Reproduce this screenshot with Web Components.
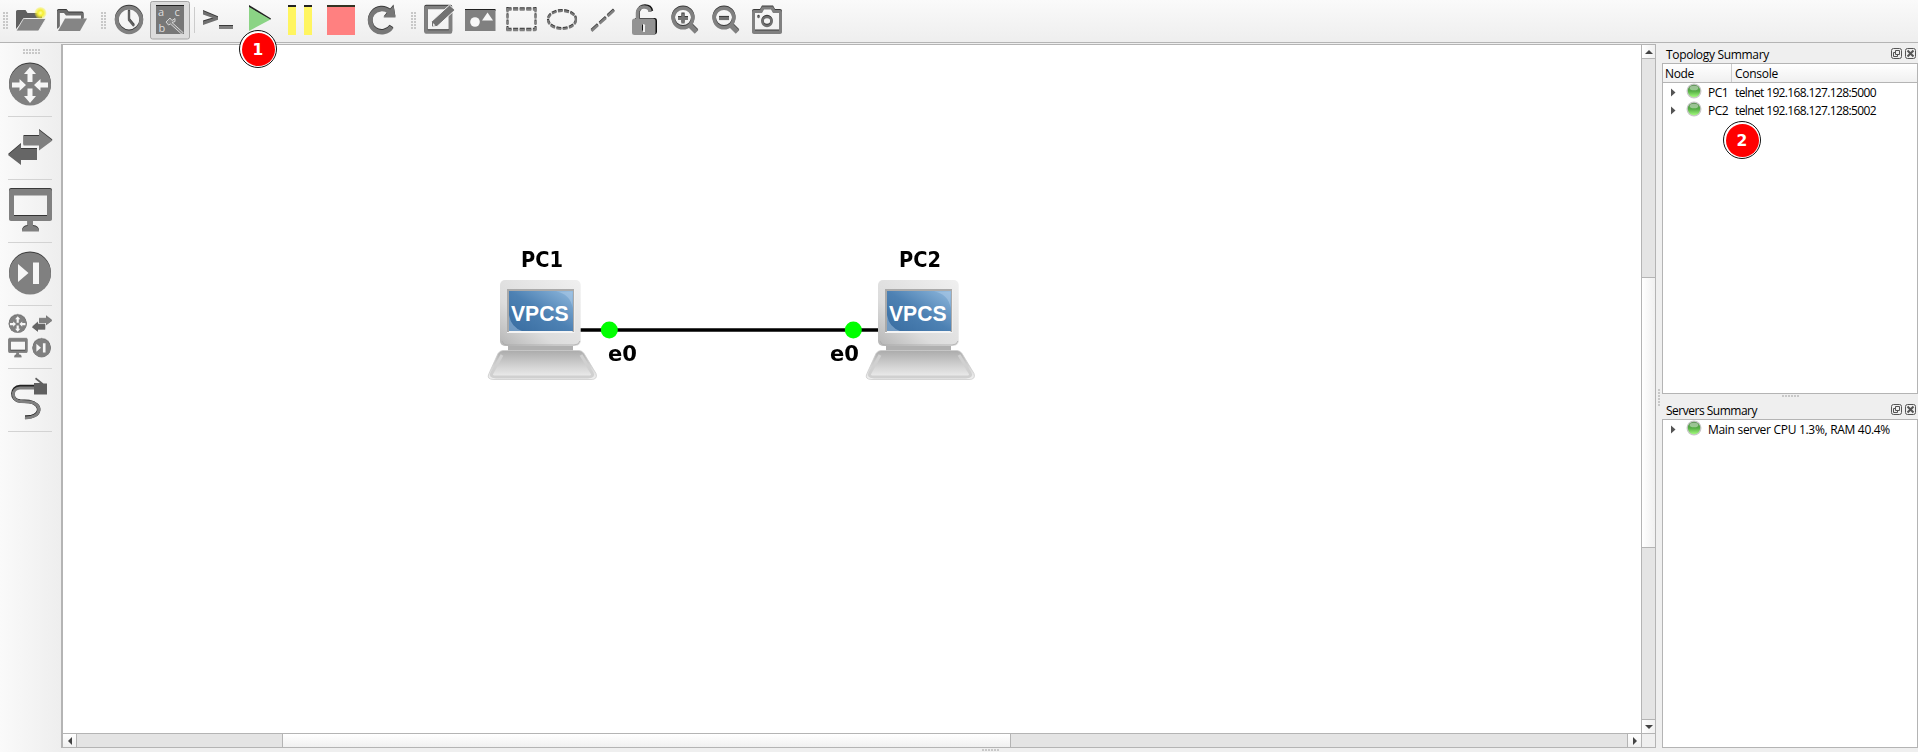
<!DOCTYPE html>
<html lang="en"><head><meta charset="utf-8"><title>Topology</title>
<style>html,body{margin:0;height:100%;overflow:hidden;background:#efefef}body{font:12px/18px "Open Sans","Noto Sans",sans-serif;color:#000}</style>
</head><body><topology-app></topology-app>
<script>
const def=(name,html,init)=>customElements.define(name,class extends HTMLElement{
  connectedCallback(){ if(this.shadowRoot)return; const r=this.attachShadow({mode:'open'});
    r.innerHTML=typeof html==='function'?html(this):html; if(init)init(this,r);}
});

/* Text fitted to a given advance width: by letter spacing, or by scaling with the stretch attribute */
def('fit-text','<style>:host{display:inline-block;white-space:nowrap;flex:none}span{display:inline-block;transform-origin:0 0}</style><span><slot></slot></span>',(el,r)=>{
  const w=+el.getAttribute('w'),s=r.querySelector('span'),n=el.textContent.length,m=s.getBoundingClientRect().width;
  el.style.width=w+'px';
  if(el.hasAttribute('stretch'))s.style.transform=`scaleX(${w/m})`; else s.style.letterSpacing=((w-m)/n)+'px';
});

const G='#808080';
const ROUTER=`<circle cx="30" cy="84.500" r="21" fill="${G}"/>`;
const routerArrows='<path fill="#f6f6f6" d="M30 67l6 7h-3.500v8h-5v-8h-3.500zM30 103l6-7h-3.500v-7.500h-5V96h-3.500zM26 85l-6.500-6v3.500H12v5h7.500V91zM34 85l6.500-6v3.500H48v5h-7.500V91z"/>';
const shapes={
 open1:`<path fill="#606060" d="M16 29V11.500q0-1.500 1.500-1.500h8l2 3H41q1 0 1 1v4H26z"/><path fill="#858585" stroke="#f6f6f6" stroke-width=".8" d="M23.500 18.500H46L38.500 31H16z"/><circle cx="40.500" cy="13" r="6" fill="url(#glow)"/><defs><radialGradient id="glow"><stop offset="0" stop-color="#ffffa0"/><stop offset=".45" stop-color="#f5ee30"/><stop offset="1" stop-color="#f5ee30" stop-opacity=".25"/></radialGradient></defs>`,
 open2:`<g class="s"><path fill="#6d6d6d" d="M57 29V11.500q0-1.500 1.500-1.500h8l2 2.500H82q1.500 0 1.500 1.500v5H81v-3.500H66l-2-2.500h-4.500V27z"/></g><path fill="#858585" d="M65 18.500h22L80 31H58z"/>`,
 clock:`<g class="s"><circle cx="129" cy="20" r="12.300" fill="none" stroke="${G}" stroke-width="3.800"/><path d="M129 10.500v9.500l5 6" fill="none" stroke="#5f5f5f" stroke-width="2.200"/></g>`,
 label:`<rect x="150.500" y="1.500" width="39" height="37.500" rx="2" fill="#dcdcdc" stroke="#a6a6a6"/><path fill="#222" d="M156 5h28v2h-28z"/><path fill="#777" d="M156 6h28v28h-28z"/><g fill="#dedede" font-family="Open Sans,sans-serif" font-size="11"><text x="158" y="16">a</text><text x="174.500" y="16">c</text><text x="158.500" y="31.500">b</text></g><path d="M166 22l4-4 2 2.500 3-2v3l-3 1 11 10-1.500 1.500-11-10-2 1z" fill="#888" stroke="#ddd" stroke-width=".9"/>`,
 console:`<g class="s"><path fill="#707070" d="M203 11l15 6.200v2.600L203 25v-3.500l10.500-3.300L203 14.500z"/><path fill="${G}" d="M219 26h14v3h-14z"/></g>`,
 play:'<path fill="#222" d="M249 5l22 13.500-1 1.500L249 7.500z"/><path fill="#8bd485" d="M249 7l21.500 12.500L249 31z"/>',
 pause:'<path fill="#222" d="M288 5h8v3h-8zM304 5h8v3h-8z"/><path fill="#fff560" d="M288 7h8v28h-8zM304 7h8v28h-8z"/>',
 stop:'<path fill="#332" d="M327 5h28v3h-28z"/><path fill="#ff8080" d="M327 7h28v28h-28z"/>',
 reload:`<g class="s"><path fill="none" stroke="#777" stroke-width="4.600" d="M389.500 12A11.600 11.600 0 1 0 391.500 27"/><path fill="#777" d="M393.500 5.500l2 12h-12z"/></g>`,
 edit:`<g class="s"><path fill="none" stroke="${G}" stroke-width="3.400" stroke-linejoin="round" d="M426 7.500h24.500v24.500H426z"/></g><path fill="#727272" stroke="#f5f5f5" stroke-width="1" d="M431.500 27v-5.500L449.500 5l5.500 5-18 16.500z"/><path fill="#eee" d="M433 23l2.500 2.500-2.500.5z"/>`,
 image:`<path fill="#222" d="M465 9h30.500v2H465z"/><path fill="${G}" d="M465 10h30.500v21H465z"/><circle cx="475" cy="22" r="4.800" fill="#f8f8f8"/><path fill="#f8f8f8" d="M482 20.500l5.500-8 5.500 8z"/>`,
 rect:`<g class="s"><path fill="none" stroke="${G}" stroke-width="2" d="M507.500 8v23m28-23v23" stroke-dasharray="4.500 1.800"/><path fill="none" stroke="${G}" stroke-width="2.400" d="M506.500 9.500h29m-29 20.500h29" stroke-dasharray="5 1.600"/></g>`,
 ellipse:`<g class="s"><ellipse cx="562" cy="20" rx="14" ry="9" fill="none" stroke="#777" stroke-width="2.200" stroke-dasharray="4.800 1.500"/></g>`,
 line:`<g class="s"><path fill="none" stroke="${G}" stroke-width="2.600" stroke-dasharray="8.500 2.400" d="M591.500 31L614.500 10"/></g>`,
 lock:`<path fill="#111" d="M635 18h20q2 0 2 2.500v11q0 3-3 3h-18z"/><path fill="none" stroke="#111" stroke-width="3.500" d="M638 19v-7q1.500-6 7-6t6.500 5"/><path fill="none" stroke="#888" stroke-width="3.500" d="M637.500 19v-6q.5-6 6.500-6t6 5"/><rect x="632" y="18.500" width="23.500" height="16.500" rx="2.500" fill="#939393"/><circle cx="643.500" cy="25.500" r="1.600" fill="#eee"/><path fill="#eee" d="M643 25h2v7h-2z"/><path stroke="#111" d="M642.500 24.500v6"/>`,
 zin:`<g class="s"><circle cx="683" cy="18" r="9.800" fill="none" stroke="${G}" stroke-width="3.500"/><path fill="none" stroke="${G}" stroke-width="5" d="M689.500 25l7 7"/><path stroke="#737373" stroke-width="3.200" d="M678 18.500h10m-5-5v10"/></g>`,
 zout:`<g class="s"><circle cx="724" cy="18" r="9.800" fill="none" stroke="${G}" stroke-width="3.500"/><path fill="none" stroke="${G}" stroke-width="5" d="M730.500 25l7 7"/><path stroke="#737373" stroke-width="3.200" d="M719 18.500h10"/></g>`,
 camera:`<g class="s"><path fill="${G}" fill-rule="evenodd" d="M754 10h6l2-3.500h11l2 3.500h5q2 0 2 2v20q0 2-2 2h-26q-2 0-2-2V12q0-2 2-2zm1 3v17.500h24V13h-6l-2-3.500h-7L762 13z"/><circle cx="767" cy="21.500" r="4.500" fill="none" stroke="#707070" stroke-width="2.500"/><circle cx="758.500" cy="17" r="1.200" fill="#666"/></g>`,
 router:`<g class="s">${ROUTER}</g>${routerArrows}`,
 sw:`<g class="s"><path fill="${G}" d="M23.500 136H39v-6l13.500 10.500L39 150.500v-5H23.500z"/><path fill="#666" d="M37 149H21v-5L8 155l13 10v-5h16z"/></g>`,
 pc:`<g class="s"><path fill="${G}" fill-rule="evenodd" d="M11 189h39q2 0 2 2v28q0 2-2 2H33v5q6 .5 6 5.500H22q0-5 5.500-5.500v-5H11q-2 0-2-2v-28q0-2 2-2zm3 6.500V216h33v-20.500z"/></g><path stroke="#333" d="M14 215.500h33"/>`,
 fw:`<g class="s"><circle cx="30" cy="273.500" r="21" fill="${G}"/></g><path fill="#f6f6f6" d="M18 264v18l10.500-9zM33 262.500h6V284h-6z"/>`,
 cable:`<g fill="none"><path stroke="#222" stroke-width="3.500" d="M34.500 386.500H20c-9 0-10 13.500 0 14.500l9 .5c14 2 13 16.500-4 15.500"/><path stroke="${G}" stroke-width="3" d="M35 388H20c-9 0-9 13 1 13.500l9 .5c13 2 12 16-5 16"/></g><path fill="#606060" d="M34 383h6l-5-4 1-1.500 7.500 6H47v11H34z"/>`
};
shapes.all=`<g transform="translate(4.800,287.500) scale(.43)">${shapes.router}</g><g transform="translate(28.500,257.500) scale(.45)">${shapes.sw}</g><g transform="translate(4.500,255.500) scale(.44)">${shapes.pc}</g><g transform="translate(28.500,228.500) scale(.437)">${shapes.fw}</g>`;

def('tool-icon',el=>{const v=el.getAttribute('view');const [,,w,h]=v.split(' ');return `<style>:host{display:block;flex:none;width:${w}px;height:${h}px}svg{display:block}.s{filter:drop-shadow(0 -1px 0 #3a3a3a)}</style><svg width="${w}" height="${h}" viewBox="${v}">${shapes[el.getAttribute('name')]}</svg>`;});

def('grip-dots',`<style>:host{display:block;flex:none;background:radial-gradient(circle at 1px 1px,#c8c8c8 .9px,transparent 1px) 0 0/3px 3px}</style>`);

def('tool-bar',()=>{
  const b=(n,i)=>n.split(' ').map((k,j)=>`<tool-icon name="${k}" view="${i+41*j} 0 41 42"></tool-icon>`).join('');
  return `<style>:host{display:flex;height:42px;background:linear-gradient(#fafafa,#eee);border-bottom:1px solid #b4b4b4}
  grip-dots{width:5px;height:17px;margin-top:12px}i{width:1px;height:26px;margin:7px 3px 0;background:#ccc}</style>
  <grip-dots style="margin-left:3px;margin-right:3px"></grip-dots>${b('open1 open2',11)}
  <grip-dots style="margin-left:8px;margin-right:3px"></grip-dots>${b('clock label',109)}<i></i>
  ${b('console play pause stop reload',198)}<grip-dots style="margin-left:8px;margin-right:2px"></grip-dots>${b('edit image rect ellipse line lock zin zout camera',418)}`;
});

def('side-bar',()=>`<style>:host{display:block;width:61px;flex:none;background:linear-gradient(90deg,#fafafa,#eee);box-sizing:border-box}
  grip-dots{width:17px;height:5px;margin:6px 0 0 23px}
  div{width:44px;height:62px;margin-left:8px;border-bottom:1px solid #d3d3d3}</style><grip-dots></grip-dots>`+
  'router sw pc fw all cable'.split(' ').map((k,j)=>`<div><tool-icon name="${k}" view="8 ${54+63*j} 45 62"></tool-icon></div>`).join(''));

def('scroll-bar',el=>{
  const v=el.hasAttribute('vertical'),[a,t]=el.getAttribute('thumb').split(' ');
  return `<style>:host{display:flex;flex-direction:${v?'column':'row'};box-sizing:border-box;background:#e4e4e4;border-${v?'left':'top'}:1px solid #b4b4b4}
  div{box-sizing:border-box;flex:none;background:linear-gradient(${v?'90deg':'180deg'},#fff,#f0f0f0);display:flex;align-items:center;justify-content:center}
  .b{${v?'height:14px':'width:14px'}}.b:first-of-type{border-${v?'bottom':'right'}:1px solid #b4b4b4}.b:last-of-type{border-${v?'top':'left'}:1px solid #b4b4b4}
  .t{${v?'height':'width'}:${t}px;border:0 solid #b4b4b4;border-${v?'width:1px 0':'width:0 1px'}}
  .g{flex:none;${v?'height':'width'}:${a-14}px}.f{flex:1}</style>
  <div class="b"><svg width="8" height="8"><path fill="#444" d="${v?'M0 6L4 2l4 4z':'M6 0L2 4l4 4z'}"/></svg></div><span class="g"></span><div class="t"></div><span class="f"></span>
  <div class="b"><svg width="8" height="8"><path fill="#444" d="${v?'M0 2L4 6l4-4z':'M2 0l4 4-4 4z'}"/></svg></div>`;
});

/* A VPCS host: name above, drawn computer below */
def('vpcs-node',`<style>:host{position:absolute;display:block;width:110px}.n{box-sizing:border-box;padding-top:2px;font:bold 20.500px/24px "DejaVu Sans",sans-serif;margin-left:34px;height:33px}svg{display:block}</style>
 <div class="n"><fit-text stretch w="42"><slot></slot></fit-text></div>
 <svg width="110" height="102" viewBox="487 279 110 102"><defs>
 <linearGradient id="c" x1="1" y1="0" x2="0" y2="1"><stop offset="0" stop-color="#f0f0f0"/><stop offset=".65" stop-color="#dcdcdc"/><stop offset="1" stop-color="#b5b5b5"/></linearGradient>
 <linearGradient id="s" x1="1" y1="0" x2="0" y2="1"><stop offset="0" stop-color="#8fb8dd"/><stop offset=".5" stop-color="#4d81b3"/><stop offset="1" stop-color="#386ca0"/></linearGradient>
 <linearGradient id="k" x1="0" y1="0" x2="0" y2="1"><stop offset="0" stop-color="#ababab"/><stop offset=".5" stop-color="#d0d0d0"/><stop offset="1" stop-color="#f2f2f2"/></linearGradient></defs>
 <path fill="#b0b0b0" d="M508 345h65v6h-65z"/><rect x="500" y="280" width="80.700" height="66" rx="5" fill="url(#c)"/><path d="M502 341q1 4 5 4h67q5 0 6-4" fill="none" stroke="#aaa" stroke-width=".8"/>
 <path fill="#f4f4f4" d="M507 289.500h67.500V333H507z"/><path fill="#aaa" d="M507 289h67v2.500h-65V332h-2zM572.500 291h1.500v41h-1.500z"/><path fill="url(#s)" d="M509 291h64v40h-64z"/>
 <path fill="#b5d0ea" opacity=".45" d="M556 291.500h16.500V308q-2-14-16.500-16.500zM509 315q2 12 13 16h-13z"/>
 <path fill="url(#k)" stroke="#ccc" stroke-width=".8" d="M503 350.500h76q3 0 5 3l12 20q2 6-5 6h-97q-8 0-5-6l9-20q2-3 5-3z"/><path fill="none" stroke="#d0d0d0" stroke-width="3" d="M502 355l-10 18q-2 4 4 4h92q6 0 4-4l-11-18"/>
 <text x="511" y="321" textLength="57.500" lengthAdjust="spacingAndGlyphs" font-family="Liberation Sans,sans-serif" font-weight="bold" font-size="22" fill="#fff">VPCS</text></svg>`);

def('number-badge',`<style>:host{position:absolute;display:block;box-sizing:border-box;width:38px;height:38px;border-radius:50%;border:1px solid #111;background:#fff;padding:1.500px}div{height:33px;border-radius:50%;background:#f00;color:#fff;font:bold 15.500px/34px "DejaVu Sans",sans-serif;text-align:center}</style><div><slot></slot></div>`);

def('topology-canvas',`<style>:host{position:relative;display:grid;box-sizing:border-box;width:1595px;height:704px;margin-top:1px;flex:none;grid-template:1fr 14px/1fr 14px;border:1px solid #b4b4b4;border-left-width:2px;background:#fff}
 .c{position:relative}.k{border:solid #b4b4b4;border-width:1px 0 0 1px;background:#efefef}
 .l,.w{position:absolute}.w{font:bold 20.500px/24px "DejaVu Sans",sans-serif}</style>
 <div class="c"><svg class="l" style="left:517px;top:275px" width="300" height="20"><path stroke="#000" stroke-width="3.500" d="M0 10h300"/><circle cx="29.300" cy="10" r="8.500" fill="#0f0"/><circle cx="273.300" cy="10" r="8.500" fill="#0f0"/></svg>
 <vpcs-node style="left:424px;top:201px">PC1</vpcs-node><vpcs-node style="left:802px;top:201px">PC2</vpcs-node>
 <fit-text class="w" stretch w="29" style="left:544.500px;top:297px">e0</fit-text><fit-text class="w" stretch w="29" style="left:766.500px;top:297px">e0</fit-text></div>
 <scroll-bar vertical thumb="232 271"></scroll-bar><scroll-bar thumb="219 729"></scroll-bar><div class="k"></div>`);

def('status-led','<style>:host{display:block;flex:none;width:16px;height:16px}svg{display:block}</style><svg width="16" height="16"><defs><linearGradient id="g" x1="0" y1="0" x2="0" y2="1"><stop offset="0" stop-color="#5c8f55"/><stop offset=".5" stop-color="#55ad45"/><stop offset="1" stop-color="#a2fb7c"/></linearGradient></defs><circle cx="8" cy="8" r="7.500" fill="#c8c8c8"/><circle cx="8" cy="8" r="6.200" fill="url(#g)"/><ellipse cx="8" cy="5" rx="4.300" ry="2.300" fill="#fff" opacity=".4"/></svg>');

def('tree-row',`<style>:host{display:flex;height:18px;line-height:20px}svg{width:6px;height:9px;margin:5px 14px 0 8px;flex:none}status-led{margin:0 6px 0 -5px}</style>
 <svg viewBox="0 0 6 9"><path fill="#555" d="M0 .5L4.500 4.500 0 8.500z"/></svg><status-led></status-led><slot></slot>`);

def('dock-panel',el=>`<style>:host{display:flex;flex-direction:column;box-sizing:border-box}header{display:flex;height:19px;line-height:21px;padding-left:4px;flex:none}
 header svg{margin-top:4px}header svg:first-of-type{margin-left:auto}header svg:last-of-type{margin:4px 2px 0 3px}
 main{flex:1;border:1px solid #b4b4b4;background:#fff}</style>
 <header><fit-text w="${el.getAttribute('w')}">${el.getAttribute('label')}</fit-text>
 <svg width="11" height="11" fill="none" stroke="#555"><rect x=".5" y=".5" width="10" height="10" rx="2"/><path d="M4.500 2.500h4v4h-4zM4 4.500H2.500v4h4V7"/></svg>
 <svg width="11" height="11" fill="none" stroke="#555"><rect x=".5" y=".5" width="10" height="10" rx="2"/><path stroke-width="2" d="M2.500 2.500l6 6m0-6l-6 6"/></svg></header><main><slot></slot></main>`);

def('topology-app',`<style>:host{display:block;position:relative;width:1918px;height:752px;overflow:hidden;background:#efefef}
 .m{display:flex;height:709px}.d{display:flex;flex-direction:column;width:256px;margin:1px 0 0 6px}
 .h{display:flex;height:18px;line-height:20px;border-bottom:1px solid #b4b4b4;background:linear-gradient(#fff,#f0f0f0)}.h span{box-sizing:border-box;width:69px;padding-left:2px;border-right:1px solid #ccc}.h fit-text{margin-left:3px}
 .x{position:absolute}</style>
 <tool-bar></tool-bar><div class="m"><side-bar></side-bar><topology-canvas></topology-canvas>
 <div class="d"><dock-panel label="Topology Summary" w="103" style="height:350px"><div class="h"><span><fit-text w="29" style="margin:0">Node</fit-text></span><fit-text w="43">Console</fit-text></div>
 <tree-row><fit-text w="20" style="margin-right:7px">PC1</fit-text><fit-text w="141">telnet 192.168.127.128:5000</fit-text></tree-row>
 <tree-row><fit-text w="20" style="margin-right:7px">PC2</fit-text><fit-text w="141">telnet 192.168.127.128:5002</fit-text></tree-row></dock-panel>
 <dock-panel label="Servers Summary" w="91" style="height:348px;margin-top:6px"><tree-row><fit-text w="182">Main server CPU 1.3%, RAM 40.4%</fit-text></tree-row></dock-panel></div></div>
 <grip-dots class="x" style="left:1782px;top:395px;width:18px;height:3px"></grip-dots><grip-dots class="x" style="left:1658px;top:389px;width:3px;height:17px"></grip-dots><grip-dots class="x" style="left:982px;top:749px;width:18px;height:3px"></grip-dots>
 <number-badge style="left:239px;top:30px">1</number-badge><number-badge style="left:1723px;top:121px">2</number-badge>`);
</script></body></html>
